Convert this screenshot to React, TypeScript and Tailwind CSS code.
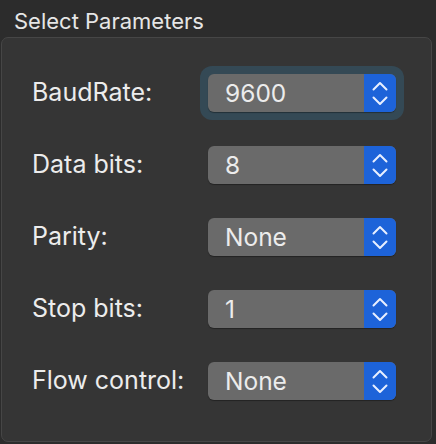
const rows = [
  { label: "BaudRate:", value: "9600", focus: true },
  { label: "Data bits:", value: "8" },
  { label: "Parity:", value: "None" },
  { label: "Stop bits:", value: "1" },
  { label: "Flow control:", value: "None" },
];

function Arrows() {
  return (
    <svg width="16" height="25" viewBox="0 0 16 25" fill="none" stroke="currentColor" strokeWidth="2" strokeLinecap="round" strokeLinejoin="round">
      <polyline points="1.5,8.5 8,2 14.5,8.5" />
      <polyline points="1.5,16.5 8,23 14.5,16.5" />
    </svg>
  );
}

function Select({ value, focus }: { value: string; focus?: boolean }) {
  return (
    <div className={`rounded-[12px] p-[8px] -m-[8px] ${focus ? "bg-[#344955]" : ""}`}>
      <div className="flex h-[38px] w-[188px] overflow-hidden rounded-[6px] bg-[#6a6a6a] shadow-[0_1px_1px_rgba(0,0,0,0.35)]">
        <div className="flex flex-1 items-center pl-[17px] text-[24.5px] text-[#ececec]">{value}</div>
        <div className="flex w-[32px] items-center justify-center bg-[#1d63d9] text-[#e8efff]">
          <Arrows />
        </div>
      </div>
    </div>
  );
}

export default function App() {
  return (
    <div className="h-[444px] w-[436px] bg-[#2c2c2c] pt-[8px]" style={{ fontFamily: "Inter, 'Liberation Sans', sans-serif" }}>
      <div className="pl-[14px] text-[22px] leading-[26px] text-[#e6e6e6]">Select Parameters</div>
      <div className="ml-[1px] mt-[3px] h-[405px] w-[431px] rounded-[7px] border border-[#464646] bg-[#353535] pl-[30px] pt-[36px]">
        <div className="flex flex-col gap-[34px]">
          {rows.map((r) => (
            <div key={r.label} className="flex items-center">
              <div className="w-[176px] text-[25px] text-[#ececec]">{r.label}</div>
              <Select value={r.value} focus={r.focus} />
            </div>
          ))}
        </div>
      </div>
    </div>
  );
}
